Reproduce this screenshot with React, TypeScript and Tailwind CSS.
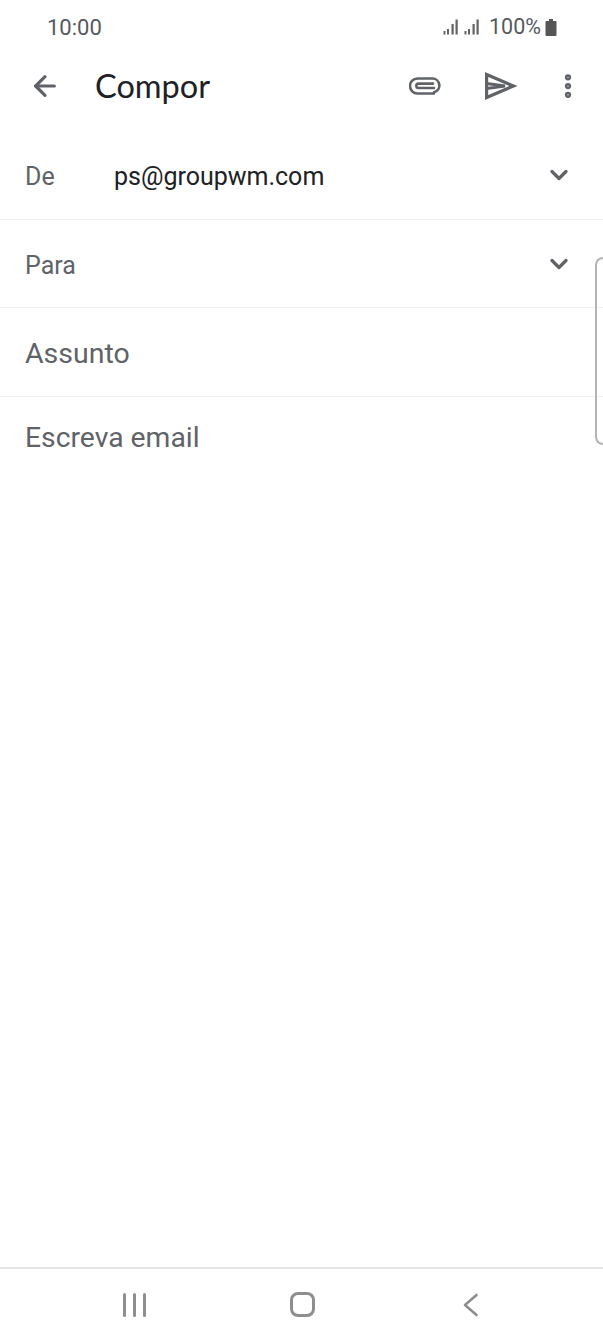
import { ArrowLeft, ChevronDown, EllipsisVertical } from "lucide-react";

function Signal() {
  return (
    <svg width="16" height="16" viewBox="0 0 16 16" fill="#636363">
      <rect x="0.5" y="12" width="2" height="3.5" />
      <rect x="4" y="10" width="2" height="5.5" />
      <rect x="8.5" y="5" width="2.2" height="10.5" />
      <rect x="12.5" y="0.5" width="2.2" height="15" />
    </svg>
  );
}

function Battery() {
  return (
    <svg width="12" height="17" viewBox="0 0 12 17" fill="#555555">
      <rect x="4" y="0" width="4" height="2" />
      <rect x="0.5" y="2" width="11" height="15" rx="1" />
    </svg>
  );
}

function PaperClip() {
  return (
    <svg width="32" height="18" viewBox="0 0 32 18" fill="none" stroke="#5f6368" strokeWidth="2.6" strokeLinecap="round">
      <path d="M25 16.5H8.5a7.5 7.5 0 0 1 0-15h15a7 7 0 0 1 1.5 13.8" />
      <path d="M25 11H9.5a2.2 2.2 0 0 1 0-4.4H24" />
    </svg>
  );
}

function SendIcon() {
  return (
    <svg width="32" height="28" viewBox="0 0 32 28" fill="none" stroke="#5f6368" strokeWidth="3.2">
      <path d="M1.6 2.5 28.5 14 1.6 25.5Z" />
      <path d="M1.6 11.5 20 14 1.6 16.5" strokeWidth="3" />
    </svg>
  );
}

function BackIcon() {
  return (
    <svg width="16" height="24" viewBox="0 0 16 24" fill="none" stroke="#8e8e8e" strokeWidth="2.6" strokeLinecap="round" strokeLinejoin="round">
      <path d="M13.5 2 2 12 13.5 22" />
    </svg>
  );
}

function Row({ label, value, height }: { label: string; value?: string; height: string }) {
  return (
    <div className={`flex items-center border-b border-[#f1f1f1] pl-[25px] pr-[30px] ${height}`}>
      <span className="mt-[4px] w-[89px] text-[25px] text-[#5f6368]">{label}</span>
      <span className="mt-[4px] flex-1 text-[25px] text-[#202124]">{value}</span>
      <ChevronDown size={28} strokeWidth={2.8} color="#5f6368" />
    </div>
  );
}

export default function App() {
  return (
    <div className="relative flex h-[1342px] w-[603px] flex-col overflow-hidden bg-white font-['Roboto',sans-serif]">
      <div className="flex h-[50px] items-center justify-between pl-[47px] pr-[46px] pt-[4px]">
        <span className="text-[22px] text-[#555a5f]">10:00</span>
        <div className="flex items-center">
          <Signal />
          <span className="w-[5px]" />
          <Signal />
          <span className="ml-[9px] text-[21.5px] text-[#555a5f]">100%</span>
          <span className="w-[4px]" />
          <Battery />
        </div>
      </div>

      <div className="flex h-[72px] items-center pl-[29px] pr-[20px]">
        <ArrowLeft size={32} strokeWidth={2.4} color="#5f6368" />
        <span className="ml-[34px] flex-1 font-['Lato',sans-serif] text-[32.5px] text-[#202124]">Compor</span>
        <PaperClip />
        <span className="w-[44px]" />
        <SendIcon />
        <span className="w-[36px]" />
        <EllipsisVertical size={30} strokeWidth={3} color="#5f6368" />
      </div>

      <div className="h-[8px]" />
      <Row label="De" value="ps@groupwm.com" height="h-[90px]" />
      <Row label="Para" height="h-[88px]" />
      <div className="flex h-[89px] items-center border-b border-[#f1f1f1] pl-[25px] pt-[5px] text-[28.5px] text-[#5f6368]">Assunto</div>
      <div className="flex-1 pl-[25px] pt-[20px] text-[28.3px] text-[#5f6368]">Escreva email</div>

      <div className="flex h-[75px] items-center border-t-2 border-[#e4e4e4] pb-[2px] pl-[123px]">
        <div className="flex gap-[7px]">
          <span className="h-[24px] w-[3px] rounded-full bg-[#8e8e8e]" />
          <span className="h-[24px] w-[3px] rounded-full bg-[#8e8e8e]" />
          <span className="h-[24px] w-[3px] rounded-full bg-[#8e8e8e]" />
        </div>
        <span className="ml-[144px] h-[25px] w-[25px] rounded-[8px] border-[3px] border-[#8e8e8e]" />
        <span className="ml-[148px] flex">
          <BackIcon />
        </span>
      </div>

      <div className="absolute right-0 top-[257px] h-[188px] w-[8px] rounded-l-[8px] border-y-2 border-l-2 border-[#b4b4b4]" />
    </div>
  );
}
